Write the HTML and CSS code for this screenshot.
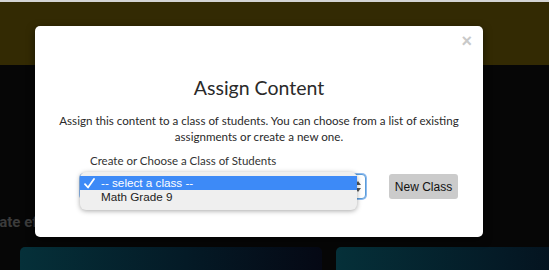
FILE: index.html
```html
<!DOCTYPE html>
<html>
<head>
<meta charset="utf-8">
<link rel="stylesheet" href="styles.css">
</head>
<body>
<header class="hero"></header>
<main class="content">
  <h2 class="section-title">Create effective lessons</h2>
  <div class="cards">
    <div class="card"></div>
    <div class="card"></div>
  </div>
</main>

<div class="modal">
  <button class="close" aria-label="Close">×</button>
  <h1 class="modal-title">Assign Content</h1>
  <p class="modal-text">Assign this content to a class of students. You can choose from a list of existing assignments or create a new one.</p>
  <div class="form-row">
    <div class="field">
      <label class="field-label">Create or Choose a Class of Students</label>
      <div class="select">
        <span class="select-value">-- select a class --</span>
        <span class="stepper">
          <svg width="6" height="11" viewBox="0 0 6 11"><path d="M3 0 L6 4 L0 4 Z M0 7 L6 7 L3 11 Z" fill="#555"/></svg>
        </span>
        <ul class="menu">
          <li class="menu-item selected"><span class="check"><svg width="11" height="11" viewBox="0 0 11 11"><path d="M1 6.2 L4 9.5 L10 1" fill="none" stroke="#fff" stroke-width="1.8" stroke-linecap="round" stroke-linejoin="round"/></svg></span>-- select a class --</li>
          <li class="menu-item"><span class="check"></span>Math Grade 9</li>
        </ul>
      </div>
    </div>
    <button class="btn">New Class</button>
  </div>
</div>
</body>
</html>
```

FILE: styles.css
```css
html, body {
  margin: 0;
  padding: 0;
}
body {
  background: #060606;
  width: 549px;
  height: 270px;
  overflow: hidden;
  position: relative;
  font-family: Lato, "Noto Sans", sans-serif;
}
.hero {
  height: 63px;
  background: #332a03;
  border-top: 2px solid #d4d4d4;
}
.content {
  padding: 0 0 0 20px;
  overflow: hidden;
}
.section-title {
  margin: 0;
  padding-top: 147px;
  margin-left: -44px;
  font-family: Roboto, sans-serif;
  font-size: 15px;
  font-weight: 700;
  color: #3b3b3b;
  line-height: 20px;
  white-space: nowrap;
}
.cards {
  display: flex;
  gap: 14px;
  margin-top: 15px;
}
.card {
  width: 302px;
  height: 23px;
  flex: none;
  border-radius: 5px 5px 0 0;
  background: linear-gradient(to right, #053039 0%, #041a26 55%, #050814 100%);
}

.modal {
  position: absolute;
  left: 35px;
  top: 26px;
  width: 448px;
  height: 211px;
  background: #fff;
  border-radius: 5px;
  box-shadow: 0 3px 9px rgba(0,0,0,.5);
  box-sizing: border-box;
  text-align: center;
  color: #333;
}
.close {
  position: absolute;
  right: 11px;
  top: 5px;
  border: 0;
  background: none;
  padding: 0;
  font-family: "Liberation Sans", sans-serif;
  font-size: 18px;
  font-weight: 700;
  color: #c9c9c9;
  line-height: 20px;
  cursor: pointer;
}
.modal-title {
  margin: 0;
  padding-top: 50px;
  font-size: 19.5px;
  font-weight: 400;
  line-height: 24px;
  color: #2a2a2a;
}
.modal-text {
  margin: 13px 0 0;
  padding: 0 20px;
  font-size: 11.6px;
  line-height: 16px;
  color: #2a2a2a;
}
.form-row {
  display: flex;
  align-items: flex-end;
  margin: 8px 0 0 45px;
  gap: 23px;
}
.field {
  display: flex;
  flex-direction: column;
  text-align: left;
  width: 286px;
}
.field-label {
  margin-left: 10px;
  font-size: 11.5px;
  line-height: 16px;
  color: #333;
  margin-bottom: 5px;
}
.select {
  position: relative;
  height: 25px;
  box-sizing: border-box;
  border: 1px solid #5b9dd9;
  border-radius: 4px;
  box-shadow: 0 0 0 1px #8fbbf0;
  background: #fff;
  display: flex;
  align-items: center;
  justify-content: space-between;
  padding: 0 4px 0 20px;
  font-family: "Liberation Sans", sans-serif;
  font-size: 12px;
}
.select-value {
  visibility: hidden;
}
.stepper {
  display: flex;
}
.menu {
  position: absolute;
  left: -1px;
  top: -3px;
  width: 277px;
  margin: 0;
  padding: 4px 0 6px;
  list-style: none;
  background: #efefef;
  border-radius: 6px;
  box-shadow: 0 1px 5px rgba(0,0,0,.35);
  font-family: "Liberation Sans", sans-serif;
  font-size: 11.7px;
  color: #222;
}
.menu-item {
  height: 14px;
  line-height: 14px;
  display: flex;
  align-items: center;
  white-space: nowrap;
}
.menu-item.selected {
  background: #3d8af7;
  color: #fff;
}
.check {
  width: 21px;
  flex: none;
  padding-left: 4px;
  box-sizing: border-box;
  display: flex;
  align-items: center;
}
.btn {
  width: 69px;
  height: 25px;
  border: 0;
  border-radius: 3px;
  background: #cbcbcb;
  font-family: "Liberation Sans", sans-serif;
  font-size: 12px;
  color: #111;
  padding: 0;
}
```
